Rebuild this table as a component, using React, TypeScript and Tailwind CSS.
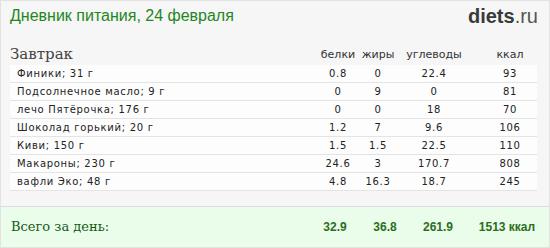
const rows = [
  { name: "Финики; 31 г", b: "0.8", f: "0", c: "22.4", k: "93" },
  { name: "Подсолнечное масло; 9 г", b: "0", f: "9", c: "0", k: "81" },
  { name: "лечо Пятёрочка; 176 г", b: "0", f: "0", c: "18", k: "70" },
  { name: "Шоколад горький; 20 г", b: "1.2", f: "7", c: "9.6", k: "106" },
  { name: "Киви; 150 г", b: "1.5", f: "1.5", c: "22.5", k: "110" },
  { name: "Макароны; 230 г", b: "24.6", f: "3", c: "170.7", k: "808" },
  { name: "вафли Эко; 48 г", b: "4.8", f: "16.3", c: "18.7", k: "245" },
];

export default function App() {
  return (
    <div className="flex h-[248px] w-[550px] flex-col border border-[#e2e2e2] bg-[#f6f6f6]">
      {/* header */}
      <div className="flex h-[36px] items-start justify-between px-[9px] pt-[3px]">
        <h1 className="font-['Liberation_Sans',sans-serif] text-[16px] leading-[24px] text-[#23861d]">
          Дневник питания, 24 февраля
        </h1>
        <div className="pr-[2px] font-['Liberation_Sans',sans-serif] text-[20px] leading-[24px] text-[#3a3a3a]">
          <span className="font-bold">diets</span>
          <span className="text-[#555]">.ru</span>
        </div>
      </div>

      {/* meal */}
      <div className="flex-1 px-[9px]">
        <div className="mr-[3px] flex h-[28px] items-end pb-[1px]">
          <div className="flex-1 font-['DejaVu_Serif',serif] text-[15px] leading-[20px] text-[#444]">
            Завтрак
          </div>
          <div className="flex font-['DejaVu_Sans',sans-serif] text-[11px] leading-[18px] text-[#333]">
            <span className="w-[40px] text-center">белки</span>
            <span className="w-[40px] text-center">жиры</span>
            <span className="w-[72px] text-center">углеводы</span>
            <span className="ml-[13px] w-[54px] text-center">ккал</span>
          </div>
        </div>
        <div className="mr-[3px]">
          {rows.map((r) => (
            <div
              key={r.name}
              className="flex h-[18px] items-center border-b border-[#e4e4e4] bg-[#fdfdfd] font-['DejaVu_Sans',sans-serif] text-[10px] tracking-[0.7px] text-[#222]"
            >
              <span className="flex-1 pl-[7px]">{r.name}</span>
              <span className="w-[40px] text-center">{r.b}</span>
              <span className="w-[40px] text-center">{r.f}</span>
              <span className="w-[72px] text-center">{r.c}</span>
              <span className="ml-[13px] w-[54px] text-center">{r.k}</span>
            </div>
          ))}
        </div>
      </div>

      {/* totals */}
      <div className="flex h-[41px] items-center border-t border-[#dcdcdc] bg-[#eafdea] pl-[10px] pr-[12px]">
        <div className="flex-1 font-['DejaVu_Serif',serif] text-[13px] text-[#165a16]">
          Всего за день:
        </div>
        <div className="flex font-['Liberation_Sans',sans-serif] text-[12px] font-bold text-[#2b6e22]">
          <span className="w-[50px] text-center">32.9</span>
          <span className="w-[50px] text-center">36.8</span>
          <span className="w-[56px] text-center">261.9</span>
          <span className="ml-[11px] w-[60px] text-center">1513 ккал</span>
        </div>
      </div>
    </div>
  );
}
